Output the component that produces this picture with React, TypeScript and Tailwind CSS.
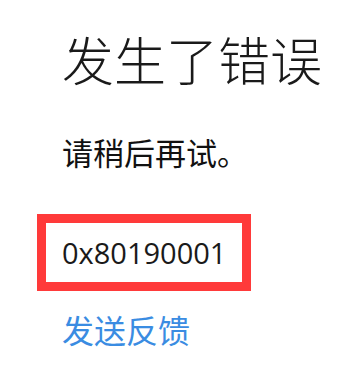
import React from "react";

export default function App() {
  const cjk = { fontFamily: '"Noto Sans CJK SC", "Noto Sans", sans-serif' };
  return (
    <div className="w-[339px] h-[382px] bg-white overflow-hidden" style={cjk}>
      <div className="pl-[62px] pt-[24px] flex flex-col items-start">
        <div className="text-[52px] leading-[70px] font-light text-[#1a1a1a]">发生了错误</div>
        <div className="mt-[38px] text-[31px] leading-[40px] text-[#111]">请稍后再试。</div>
        <div className="mt-[42px] -ml-[25px] border-[9px] border-[#ff3a3a] w-[214px] h-[77px] pl-[16px] flex items-center">
          <span className="text-[29px] leading-[40px] text-[#1a1a1a]" style={{ fontFamily: '"Open Sans", "Noto Sans", sans-serif' }}>0x80190001</span>
        </div>
        <div className="mt-[18px] text-[32px] leading-[40px] text-[#3a8ce2]">发送反馈</div>
      </div>
    </div>
  );
}
